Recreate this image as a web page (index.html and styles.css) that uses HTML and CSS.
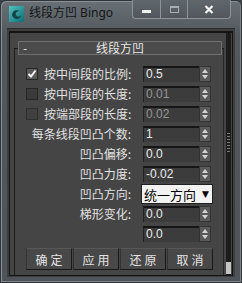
FILE: index.html
```html
<!DOCTYPE html>
<html lang="zh">
<head>
    <meta charset="UTF-8">
    <meta name="viewport" content="width=device-width, initial-scale=1.0">
    <title>线段方凹 Bingo</title>
    <link rel="stylesheet" href="styles.css">
</head>
<body>
    <div class="window">
        <div class="titlebar">
            <svg class="app-icon" width="15" height="16" viewBox="0 0 15 16">
                <defs>
                    <linearGradient id="iconFill" x1="0" y1="0" x2="1" y2="1">
                        <stop offset="0" stop-color="#4fc4c0"/>
                        <stop offset="1" stop-color="#0d6d74"/>
                    </linearGradient>
                </defs>
                <rect width="15" height="16" fill="url(#iconFill)"/>
                <path d="M3 9 C3 5 7 3 11 5 C8 5 6 7 7 9 C8 11 11 11 12 9 C12 13 7 14 5 12 C4 11 3 10 3 9 Z" fill="#16444a"/>
            </svg>
            <span class="title">线段方凹 Bingo</span>
            <div class="caption-buttons">
                <div class="cap-btn cap-min"><span class="min-bar"></span></div>
                <div class="cap-btn cap-max"><span class="max-box"></span></div>
                <div class="cap-btn cap-close">
                    <svg width="10" height="9" viewBox="0 0 10 9">
                        <path d="M1.5 1 L8.5 8 M8.5 1 L1.5 8" stroke="#f2f2f2" stroke-width="2.2"/>
                    </svg>
                </div>
            </div>
        </div>

        <div class="client">
            <div class="panel">
                <div class="rollout">
                    <div class="rollout-head">
                        <span class="collapse">-</span>
                        <span class="rollout-title">线段方凹</span>
                    </div>

                    <div class="row">
                        <div class="label">
                            <span class="checkbox checked">
                                <svg width="10" height="10" viewBox="0 0 10 10"><path d="M1.5 5 L4 7.5 L8.5 1.5" stroke="#f4f4f4" stroke-width="2" fill="none"/></svg>
                            </span>按中间段的比例:
                        </div>
                        <div class="spinner"><span class="field">0.5</span><span class="arrows"></span></div>
                    </div>
                    <div class="row">
                        <div class="label"><span class="checkbox"></span>按中间段的长度:</div>
                        <div class="spinner"><span class="field disabled">0.01</span><span class="arrows"></span></div>
                    </div>
                    <div class="row">
                        <div class="label"><span class="checkbox dim"></span>按端部段的长度:</div>
                        <div class="spinner"><span class="field disabled">0.02</span><span class="arrows"></span></div>
                    </div>
                    <div class="row">
                        <div class="label right">每条线段凹凸个数:</div>
                        <div class="spinner"><span class="field">1</span><span class="arrows"></span></div>
                    </div>
                    <div class="row">
                        <div class="label right">凹凸偏移:</div>
                        <div class="spinner"><span class="field">0.0</span><span class="arrows"></span></div>
                    </div>
                    <div class="row">
                        <div class="label right">凹凸力度:</div>
                        <div class="spinner"><span class="field">-0.02</span><span class="arrows"></span></div>
                    </div>
                    <div class="row">
                        <div class="label right">凹凸方向:</div>
                        <div class="dropdown"><span>统一方向</span><span class="drop-arrow">▼</span></div>
                    </div>
                    <div class="row">
                        <div class="label right">梯形变化:</div>
                        <div class="spinner"><span class="field">0.0</span><span class="arrows"></span></div>
                    </div>
                    <div class="row">
                        <div class="label right"></div>
                        <div class="spinner"><span class="field">0.0</span><span class="arrows"></span></div>
                    </div>

                    <div class="buttons">
                        <div class="btn">确定</div>
                        <div class="btn">应用</div>
                        <div class="btn">还原</div>
                        <div class="btn">取消</div>
                    </div>
                </div>
                <div class="scrollbar">
                    <div class="grip"></div>
                    <div class="thumb"></div>
                </div>
            </div>
        </div>
    </div>
</body>
</html>
```

FILE: styles.css
```css
* {
    box-sizing: border-box;
}
body {
    margin: 0;
    width: 242px;
    height: 283px;
    overflow: hidden;
    font-family: "Noto Sans CJK SC", sans-serif;
    font-size: 12px;
    background-color: #3c4246;
}
.window {
    height: 283px;
    display: flex;
    flex-direction: column;
    background: linear-gradient(to bottom, #687075 0%, #52595e 12%, #4e5459 100%);
    border: 1px solid #2f3539;
    border-radius: 6px 6px 0 0;
    box-shadow: inset 1px 1px 0 #8a9196, inset -1px -1px 0 #7c8388;
}
.titlebar {
    height: 27px;
    display: flex;
    align-items: flex-start;
}
.app-icon {
    margin: 5px 0 0 8px;
    flex: none;
}
.title {
    margin: 5px 0 0 5px;
    line-height: 14px;
    font-size: 12px;
    color: #151515;
    font-family: "Noto Sans", "Noto Sans CJK SC", sans-serif;
}
.caption-buttons {
    margin-left: auto;
    margin-right: 10px;
    margin-top: -1px;
    display: flex;
    height: 19px;
    border: 1px solid #8d9398;
    border-top: none;
    border-radius: 0 0 4px 4px;
    background: linear-gradient(to bottom, #60676c, #51575c);
}
.cap-btn {
    display: flex;
    align-items: center;
    justify-content: center;
}
.cap-min {
    width: 28px;
    border-right: 1px solid #8d9398;
}
.cap-max {
    width: 27px;
    border-right: 1px solid #8d9398;
}
.cap-close {
    width: 42px;
}
.min-bar {
    width: 9px;
    height: 3px;
    margin-top: 5px;
    background-color: #f0f0f0;
}
.max-box {
    width: 9px;
    height: 7px;
    border: 1px solid #a9aeb2;
    border-top-width: 2px;
}
.client {
    margin: 0 6px;
    height: 249px;
    padding: 2px 2px 1px 2px;
    background-color: #3e3e3e;
    border-top: 1px solid #2c2c2c;
}
.panel {
    height: 100%;
    display: flex;
    background-color: #454545;
    border: 1px solid #151515;
    border-width: 2px 1px 1px 1px;
}
.rollout {
    flex: 1;
    margin: 15px 2px 0 4px;
    border-left: 1px solid #1c1c1c;
    border-right: 1px solid #262626;
    border-top: 1px solid #1c1c1c;
}
.rollout-head {
    position: relative;
    height: 14px;
    margin: -8px 1px 0 3px;
    border: 1px solid #707070;
    background-color: #4b4b4b;
    color: #e8e8e8;
    text-align: center;
    line-height: 12px;
}
.collapse {
    position: absolute;
    left: 4px;
    top: 0;
}
.row {
    height: 20px;
    display: flex;
    align-items: center;
    padding-left: 11px;
    color: #e2e2e2;
}
.rollout-head + .row {
    margin-top: 9px;
}
.label {
    width: 110px;
    display: flex;
    align-items: center;
    white-space: nowrap;
    line-height: 14px;
}
.label.right {
    justify-content: flex-end;
    padding-right: 5px;
}
.checkbox {
    width: 12px;
    height: 12px;
    margin-right: 6px;
    display: flex;
    align-items: center;
    justify-content: center;
    background-color: #3a3a3a;
    border: 1px solid #262626;
}
.checkbox.checked {
    background-color: #595959;
}
.checkbox.dim {
    background-color: #404040;
    border-color: #2e2e2e;
}
.spinner {
    display: flex;
    margin-left: 7px;
    height: 16px;
}
.field {
    width: 56px;
    padding-left: 2px;
    background-color: #3c3c3c;
    border-top: 2px solid #161616;
    border-left: 1px solid #222;
    color: #ececec;
    font-family: "Liberation Sans", sans-serif;
    font-size: 12px;
    line-height: 13px;
}
.field.disabled {
    color: #959595;
}
.arrows {
    position: relative;
    width: 12px;
    background-color: #5a5a5a;
    border: 1px solid #333;
}
.arrows::before,
.arrows::after {
    content: "";
    position: absolute;
    left: 2px;
    border-left: 3px solid transparent;
    border-right: 3px solid transparent;
}
.arrows::before {
    top: 2px;
    border-bottom: 4px solid #d4d4d4;
}
.arrows::after {
    top: 8px;
    border-top: 4px solid #d4d4d4;
}
.dropdown {
    margin-left: 5px;
    width: 72px;
    height: 20px;
    display: flex;
    align-items: center;
    justify-content: space-between;
    padding: 0 3px 0 2px;
    background-color: #f2f2f2;
    border: 1px solid #202020;
    color: #000;
    font-size: 13px;
}
.drop-arrow {
    font-size: 9px;
    font-family: "DejaVu Sans", sans-serif;
}
.buttons {
    display: flex;
    gap: 1px;
    margin: 4px 0 0 11px;
}
.btn {
    width: 46px;
    height: 22px;
    display: flex;
    align-items: center;
    justify-content: center;
    letter-spacing: 3px;
    padding-left: 3px;
    font-size: 12px;
    color: #e4e4e4;
    background-color: #484848;
    border: 1px solid #1a1a1a;
    border-top-color: #585858;
    border-left-color: #333;
}
.scrollbar {
    width: 5px;
    margin-right: 1px;
    display: flex;
    flex-direction: column;
    background-color: #1c1c1c;
}
.grip {
    margin-top: 100px;
    height: 19px;
    background: repeating-linear-gradient(to bottom, #7a7a7a 0 1px, transparent 1px 3px);
    margin-left: 1px;
    margin-right: 1px;
}
.thumb {
    margin-top: auto;
    height: 12px;
    margin-bottom: 1px;
    background-color: #c4c4c4;
}
```
